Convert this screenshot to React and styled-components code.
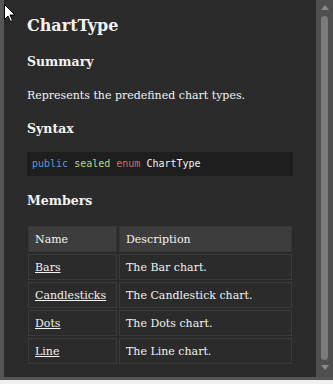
import React from "react"
import styled, { createGlobalStyle } from "styled-components"

const Global = createGlobalStyle`
  html, body {
    margin: 0;
    padding: 0;
    background: #f0f0f0;
  }
`

const Frame = styled.div`
  position: relative;
  display: flex;
  width: 333px;
  height: 380px;
  box-sizing: border-box;
  padding: 0 0 3px 4px;
  background: #555555;
  overflow: hidden;
`

const Panel = styled.div`
  flex: 1;
  background: #2b2b2b;
  padding: 15px 0 0 23px;
  color: #f2f2f2;
  font-family: "DejaVu Serif", serif;
  overflow: hidden;
`

const Title = styled.h1`
  margin: 0;
  font-size: 16px;
  font-weight: bold;
  line-height: 22px;
`

const Heading = styled.h2`
  margin: 15px 0 0;
  font-size: 12.5px;
  font-weight: bold;
  line-height: 20px;
`

const Text = styled.p`
  margin: 16px 0 0;
  font-size: 11px;
  line-height: 16px;
`

const Code = styled.pre`
  margin: 13px 0 0;
  width: 266px;
  box-sizing: border-box;
  padding: 5px 5px;
  background: #1e1e1e;
  font-family: "DejaVu Sans Mono", monospace;
  font-size: 10px;
  line-height: 14px;
`

const Token = styled.span`
  color: ${(p) => p.$color};
`

const Table = styled.table`
  margin-top: 13px;
  margin-left: -1px;
  border-collapse: separate;
  border-spacing: 2px;
  width: 268px;
  font-size: 11px;
`

const Th = styled.th`
  text-align: left;
  font-weight: normal;
  background: #3d3d3d;
  border: 1px solid #363636;
  height: 24px;
  padding: 0 6px;
  width: ${(p) => p.$w || "auto"};
`

const Td = styled.td`
  border: 1px solid #3a3a3a;
  height: 24px;
  padding: 0 6px;
`

const Link = styled.a`
  color: #f2f2f2;
  text-decoration: underline;
`

const Scrollbar = styled.div`
  width: 17px;
  background: #4f4f4f;
  display: flex;
  flex-direction: column;
  align-items: center;
`

const Arrow = styled.div`
  width: 0;
  height: 0;
  border-left: 4px solid transparent;
  border-right: 4px solid transparent;
  ${(p) =>
    p.$down
      ? "border-top: 5px solid #8a8a8a; margin: 5px 0 7px;"
      : "border-bottom: 5px solid #8a8a8a; margin: 5px 0 6px;"}
`

const Thumb = styled.div`
  flex: 1;
  width: 7px;
  border-radius: 4px;
  background: #7b7b7b;
`

const Cursor = styled.svg`
  position: absolute;
  left: 4px;
  top: 4px;
`

const members = [
  ["Bars", "The Bar chart."],
  ["Candlesticks", "The Candlestick chart."],
  ["Dots", "The Dots chart."],
  ["Line", "The Line chart."],
]

export default function App() {
  return (
    <>
      <Global />
      <Frame>
        <Panel>
          <Title>ChartType</Title>
          <Heading>Summary</Heading>
          <Text>Represents the predefined chart types.</Text>
          <Heading>Syntax</Heading>
          <Code>
            <Token $color="#569cd6">public</Token>{" "}
            <Token $color="#b8d78c">sealed</Token>{" "}
            <Token $color="#d16969">enum</Token>{" "}
            <Token $color="#f2f2f2">ChartType</Token>
          </Code>
          <Heading>Members</Heading>
          <Table>
            <thead>
              <tr>
                <Th $w="75px">Name</Th>
                <Th>Description</Th>
              </tr>
            </thead>
            <tbody>
              {members.map(([name, desc]) => (
                <tr key={name}>
                  <Td>
                    <Link href="#">{name}</Link>
                  </Td>
                  <Td>{desc}</Td>
                </tr>
              ))}
            </tbody>
          </Table>
        </Panel>
        <Scrollbar>
          <Arrow />
          <Thumb />
          <Arrow $down />
        </Scrollbar>
        <Cursor width="12" height="19" viewBox="0 0 12 19">
          <path d="M0.5 0.5 L0.5 15.5 L4 12 L6.5 17.5 L8.5 16.5 L6 11 L11 11 Z" fill="#fff" stroke="#000" strokeWidth="1" />
        </Cursor>
      </Frame>
    </>
  )
}
